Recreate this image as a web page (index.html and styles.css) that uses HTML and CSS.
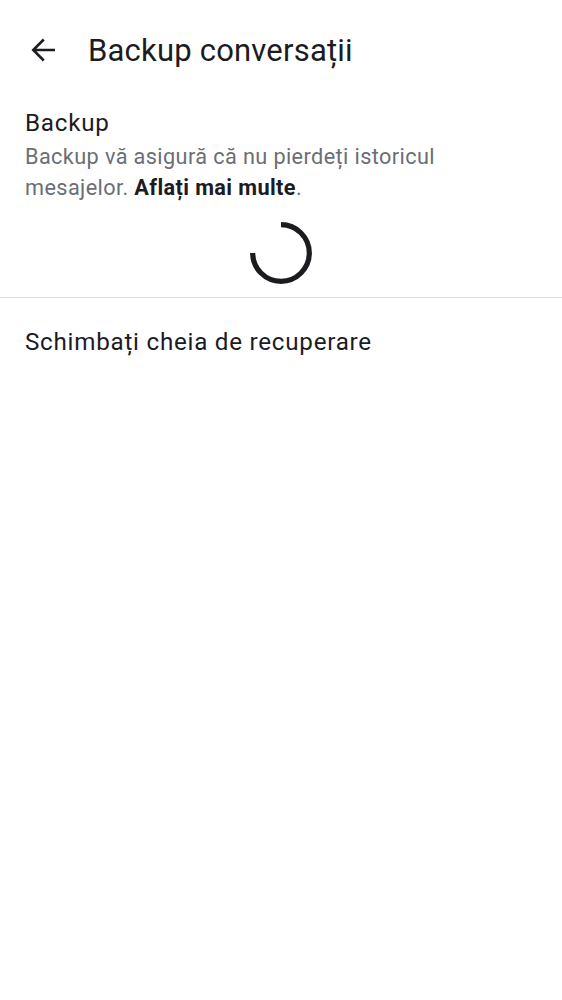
FILE: index.html
```html
<!DOCTYPE html>
<html lang="ro">
<head>
<meta charset="utf-8">
<link rel="stylesheet" href="styles.css">
</head>
<body>
<div class="screen">
  <header class="toolbar">
    <button class="back" aria-label="Înapoi">
      <svg width="36" height="36" viewBox="0 0 24 24"><path d="M20 11.1H7.6l5.5-5.5L11.9 4.4 4.3 12l7.6 7.6 1.2-1.2-5.5-5.5H20z" fill="#1c1b1f"/></svg>
    </button>
    <h1 class="title">Backup conversații</h1>
  </header>
  <section class="backup">
    <h2 class="heading">Backup</h2>
    <p class="desc">Backup vă asigură că nu pierdeți istoricul mesajelor. <b>Aflați mai multe</b>.</p>
    <div class="spinner-row">
      <svg class="spinner" width="62" height="62" viewBox="0 0 62 62">
        <path d="M31 2.7 A28.3 28.3 0 1 1 2.7 31" fill="none" stroke="#1c1b1f" stroke-width="5.2"/>
      </svg>
    </div>
  </section>
  <div class="divider"></div>
  <div class="row">Schimbați cheia de recuperare</div>
</div>
</body>
</html>
```

FILE: styles.css
```css
html, body {
  margin: 0;
  padding: 0;
  background: #ffffff;
}
body {
  font-family: Roboto, "Noto Sans", sans-serif;
  color: #1c1b1f;
}
.screen {
  width: 562px;
}
.toolbar {
  display: flex;
  align-items: center;
  height: 100px;
  padding-left: 25px;
}
.back {
  display: flex;
  align-items: center;
  justify-content: center;
  width: 36px;
  height: 36px;
  padding: 0;
  border: 0;
  background: none;
}
.title {
  margin: 0 0 0 27px;
  font-size: 31px;
  font-weight: 400;
  letter-spacing: 0.2px;
}
.backup {
  padding: 5px 25px 0 25px;
}
.heading {
  margin: 0;
  font-size: 24.2px;
  font-weight: 400;
  letter-spacing: 0.75px;
  line-height: 36px;
}
.desc {
  margin: 0;
  font-size: 21.7px;
  line-height: 31px;
  letter-spacing: 0.39px;
  color: #6b6e75;
  max-width: 440px;
}
.desc b {
  color: #1c1b1f;
  font-weight: 700;
}
.spinner-row {
  display: flex;
  justify-content: center;
  padding: 19px 0 13px;
}
.divider {
  height: 1px;
  background: #e3e3e3;
}
.row {
  padding: 26px 25px;
  font-size: 24.2px;
  letter-spacing: 0.75px;
  line-height: 36px;
}
```
